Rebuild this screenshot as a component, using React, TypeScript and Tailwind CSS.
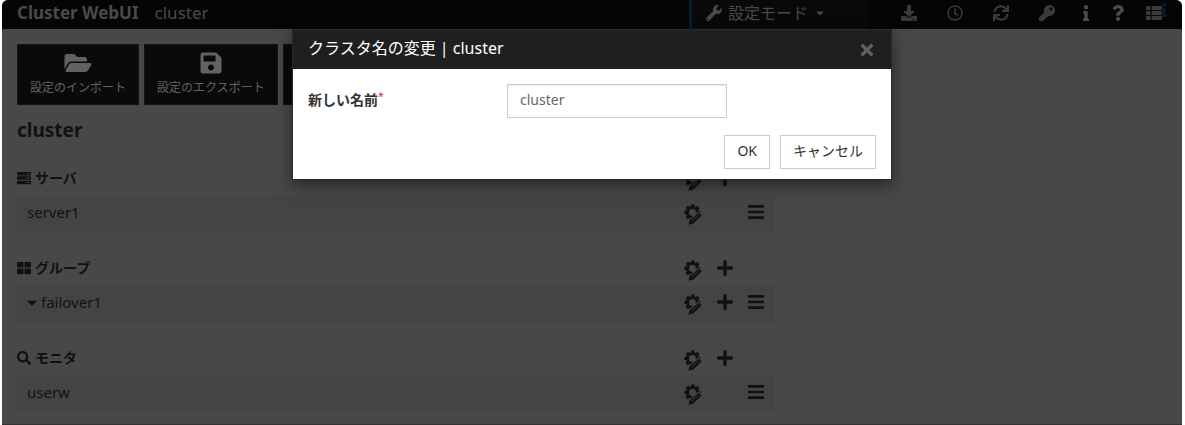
import { useState } from "react";
import type { ReactNode } from "react";
import {
  FaBars,
  FaCaretDown,
  FaDownload,
  FaFolderOpen,
  FaInfo,
  FaKey,
  FaPlus,
  FaQuestion,
  FaRegClock,
  FaSave,
  FaSearch,
  FaServer,
  FaSync,
  FaThLarge,
  FaThList,
  FaTimes,
  FaWrench,
} from "react-icons/fa";

type Section = {
  title: string;
  icon: ReactNode;
  item: string;
  expandable?: boolean;
};

const SECTIONS: Section[] = [
  { title: "サーバ", icon: <FaServer />, item: "server1" },
  { title: "グループ", icon: <FaThLarge />, item: "failover1", expandable: true },
  { title: "モニタ", icon: <FaSearch />, item: "userw" },
];

/** Gear with a pencil over its lower right corner. */
function EditIcon() {
  return (
    <svg viewBox="0 0 18 21" className="h-[21px] w-[18px]" aria-hidden="true">
      <g fill="none" stroke="#111">
        <circle cx="8.5" cy="8.5" r="5" strokeWidth="3.2" />
        <circle cx="8.5" cy="8.5" r="7" strokeWidth="2.4" strokeDasharray="3.2 2.298" strokeDashoffset="1.6" />
      </g>
      <path d="M14.6 8.6 17.6 11.4 9.3 19.4 4.6 20.6 5.6 16.8Z" fill="#111" stroke="#484848" strokeWidth="2" strokeLinejoin="round" />
      <path d="M14.7 8.4 17.8 11.4 9.3 19.6 4.4 20.8 5.6 16.6Z" fill="#111" />
      <path d="M8 17 13 12.2" fill="none" stroke="#484848" strokeWidth="0.8" />
      <path d="M13 10.2 15.8 12.9" fill="none" stroke="#484848" strokeWidth="0.5" />
    </svg>
  );
}

function Actions({ name, add, menu }: { name: string; add?: boolean; menu?: boolean }) {
  return (
    <div className="flex w-[90px] shrink-0 items-center">
      <button type="button" aria-label={`${name} 編集`} className="w-8 pt-1">
        <EditIcon />
      </button>
      <div className="w-8">
        {add && (
          <button type="button" aria-label={`${name} 追加`} className="block">
            <FaPlus className="h-[18px] w-[18px]" />
          </button>
        )}
      </div>
      {menu && (
        <button type="button" aria-label={`${name} メニュー`}>
          <FaBars className="h-[18px] w-4" preserveAspectRatio="none" />
        </button>
      )}
    </div>
  );
}

function SectionBlock({ section }: { section: Section }) {
  return (
    <section>
      <div className="flex h-9 items-center justify-between">
        <h2 className="flex items-center gap-1 text-sm font-semibold">
          {section.icon}
          {section.title}
        </h2>
        <Actions name={section.title} add />
      </div>
      <div className="flex h-9 items-center justify-between bg-[#444] pb-1">
        <div className="flex items-center gap-1 pl-[10px] text-[15px]">
          {section.expandable && <FaCaretDown className="w-[10px]" preserveAspectRatio="none" />}
          {section.item}
        </div>
        <Actions name={section.item} add={section.expandable} menu />
      </div>
    </section>
  );
}

function Toolbar() {
  const button = "flex w-[46px] items-center justify-center";
  return (
    <div className="flex h-full shrink-0 items-center text-[#3a3a3a]">
      <button type="button" aria-label="ダウンロード" className={button}><FaDownload className="h-4 w-4" /></button>
      <button type="button" aria-label="時刻情報" className={button}><FaRegClock className="h-4 w-4" /></button>
      <button type="button" aria-label="更新" className={button}><FaSync className="h-4 w-4" /></button>
      <button type="button" aria-label="パスワード" className={button}><FaKey className="h-4 w-4" /></button>
      <button type="button" aria-label="情報" className="flex w-8 items-center justify-center text-[#4a4a4a]"><FaInfo className="h-4 w-4" /></button>
      <button type="button" aria-label="ヘルプ" className="flex w-8 items-center justify-center text-[#4a4a4a]"><FaQuestion className="h-4 w-4" /></button>
      <button type="button" aria-label="アラートログ" className="relative ml-2 flex w-9 justify-start pl-1">
        <FaThList className="h-4 w-4" />
        <FaInfo className="absolute -top-[2px] left-[17px] h-[14px] w-[10px] text-[#0a1a2c]" />
      </button>
    </div>
  );
}

function RenameDialog({ onClose }: { onClose: () => void }) {
  const [name, setName] = useState("cluster");
  const button = "h-[34px] border border-[#ccc] bg-white px-3 pb-[2px] text-sm text-[#333]";

  return (
    <div className="absolute inset-x-0 top-[29px] flex justify-center">
      <form
        role="dialog"
        aria-labelledby="rename-title"
        onSubmit={(e) => {
          e.preventDefault();
          onClose();
        }}
        className="w-[600px] border border-[#2b2b2b] bg-white shadow-[0_5px_15px_rgba(0,0,0,0.5)]"
      >
        <div className="flex h-[39px] items-center justify-between bg-[#1f1f1f] px-[15px]">
          <h2 id="rename-title" className="pb-[3px] text-base text-white">クラスタ名の変更 | cluster</h2>
          <button type="button" aria-label="閉じる" onClick={onClose} className="text-[#626262]">
            <FaTimes className="h-[18px] w-[18px]" />
          </button>
        </div>
        <div className="flex px-[15px] pt-[15px]">
          <label htmlFor="cluster-name" className="w-[199px] pt-[6px] text-sm font-bold text-[#333]">
            新しい名前<sup className="font-normal text-[#c9302c]">*</sup>
          </label>
          <input
            id="cluster-name"
            value={name}
            onChange={(e) => setName(e.target.value)}
            className="h-[34px] w-[220px] border border-[#ccc] px-3 pb-1 text-sm text-[#666] shadow-[inset_0_1px_1px_rgba(0,0,0,0.075)] outline-none"
          />
        </div>
        <div className="flex justify-end gap-[10px] px-[15px] pt-[17px] pb-[10px]">
          <button type="submit" className={button}>OK</button>
          <button type="button" onClick={onClose} className={button}>キャンセル</button>
        </div>
      </form>
    </div>
  );
}

export default function App() {
  const [renaming, setRenaming] = useState(true);
  const tile = "flex h-[61px] flex-col items-center justify-center border border-[#141414] bg-[#0a0a0a] px-3 pb-[2px] text-xs text-[#626262]";

  return (
    <div className="bg-white pr-[3px] pl-[2px] font-['Noto_Sans','Noto_Sans_CJK_JP',sans-serif]">
      <div className="relative min-h-screen overflow-hidden rounded-t-md border-b border-[#333] bg-[#484848] text-[#111]">
        <header className="flex h-[29px] bg-[#050505] pl-[15px] text-[#4a4a4a]">
          <div className="flex flex-1 items-center gap-4 pb-[3px] text-[17px]">
            <span className="font-bold">Cluster WebUI</span>
            <span>cluster</span>
          </div>
          <button type="button" className="flex w-[180px] items-center gap-[6px] border-l-[3px] border-[#04202e] bg-[#090909] pb-[3px] pl-[14px] text-base">
            <FaWrench />
            設定モード
            <FaCaretDown className="h-3 w-3" />
          </button>
          <div className="flex pr-1 pb-[3px] pl-[17px]">
            <Toolbar />
          </div>
        </header>

        <main className="px-[15px] pt-[15px]">
          <div className="flex gap-[5px]">
            <button type="button" className={tile}>
              <FaFolderOpen className="h-6 w-7" />
              <span className="pt-[5px]">設定のインポート</span>
            </button>
            <button type="button" className={tile}>
              <FaSave className="h-6 w-6" />
              <span className="pt-[5px]">設定のエクスポート</span>
            </button>
            <button type="button" aria-label="設定の反映" className="h-[61px] w-[122px] border border-[#141414] bg-[#0a0a0a]" />
          </div>

          <h1 className="mt-3 text-[19px] leading-[26px] font-bold">cluster</h1>

          <div className="mt-[17px] flex w-[calc(66.66%-10px)] flex-col gap-[18px]">
            {SECTIONS.map((s) => (
              <SectionBlock key={s.title} section={s} />
            ))}
          </div>
        </main>

        {renaming && <RenameDialog onClose={() => setRenaming(false)} />}
      </div>
    </div>
  );
}
